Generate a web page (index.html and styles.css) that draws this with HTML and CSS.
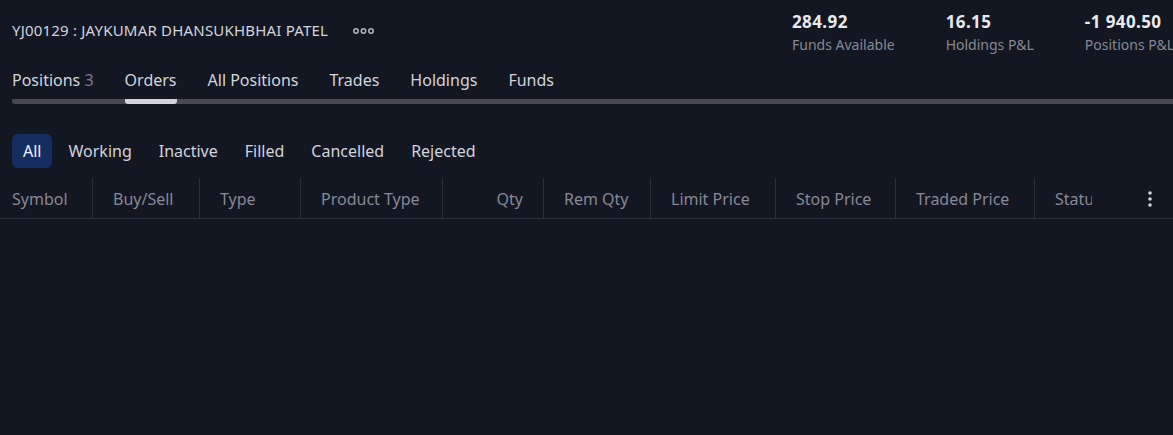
FILE: index.html
```html
<!DOCTYPE html>
<html lang="en">
<head>
<meta charset="utf-8">
<title>Orders</title>
<link rel="stylesheet" href="styles.css">
</head>
<body>
<div class="app">
  <header class="top">
    <div class="account">
      <span class="account-name">YJ00129 : JAYKUMAR DHANSUKHBHAI PATEL</span>
      <span class="more" aria-label="More">
        <svg width="22" height="8" viewBox="0 0 22 8">
          <circle cx="3" cy="4" r="2.2" fill="none" stroke="#b2b5be" stroke-width="1.5"/>
          <circle cx="10.5" cy="4" r="2.2" fill="none" stroke="#b2b5be" stroke-width="1.5"/>
          <circle cx="18" cy="4" r="2.2" fill="none" stroke="#b2b5be" stroke-width="1.5"/>
        </svg>
      </span>
    </div>
    <div class="stats">
      <div class="stat"><div class="stat-value">284.92</div><div class="stat-label">Funds Available</div></div>
      <div class="stat"><div class="stat-value">16.15</div><div class="stat-label">Holdings P&amp;L</div></div>
      <div class="stat"><div class="stat-value">-1 940.50</div><div class="stat-label">Positions P&amp;L</div></div>
    </div>
  </header>

  <nav class="tabs">
    <span class="tab">Positions <span class="count">3</span></span>
    <span class="tab active">Orders</span>
    <span class="tab">All Positions</span>
    <span class="tab">Trades</span>
    <span class="tab">Holdings</span>
    <span class="tab">Funds</span>
  </nav>

  <div class="filters">
    <span class="chip active">All</span>
    <span class="chip">Working</span>
    <span class="chip">Inactive</span>
    <span class="chip">Filled</span>
    <span class="chip">Cancelled</span>
    <span class="chip">Rejected</span>
  </div>

  <div class="thead">
    <div class="th c-symbol">Symbol</div>
    <div class="th c-side">Buy/Sell</div>
    <div class="th c-type">Type</div>
    <div class="th c-product">Product Type</div>
    <div class="th c-qty">Qty</div>
    <div class="th c-rem">Rem Qty</div>
    <div class="th c-limit">Limit Price</div>
    <div class="th c-stop">Stop Price</div>
    <div class="th c-traded">Traded Price</div>
    <div class="th c-status">Status</div>
    <div class="th c-menu">
      <svg width="4" height="16" viewBox="0 0 4 16">
        <circle cx="2" cy="2" r="1.8" fill="#d1d4dc"/>
        <circle cx="2" cy="8" r="1.8" fill="#d1d4dc"/>
        <circle cx="2" cy="14" r="1.8" fill="#d1d4dc"/>
      </svg>
    </div>
  </div>
</div>
</body>
</html>
```

FILE: styles.css
```css
* { box-sizing: border-box; }

html, body {
  margin: 0;
  height: 100%;
  background: #131722;
}

body {
  font-family: "Noto Sans", "DejaVu Sans", sans-serif;
  color: #d1d4dc;
  overflow: hidden;
}

.app {
  width: 1173px;
}

/* Header */
.top {
  display: flex;
  height: 60px;
  overflow: hidden;
}

.account {
  flex: 0 0 792px;
  display: flex;
  align-items: center;
  padding-left: 12px;
  gap: 25px;
}

.account-name {
  font-size: 15px;
  letter-spacing: 0.2px;
  color: #d1d4dc;
}

.more {
  display: flex;
  align-items: center;
  margin-top: 1px;
}

.stats {
  display: flex;
  gap: 51px;
  padding-top: 11px;
  white-space: nowrap;
}

.stat-value {
  font-size: 17px;
  font-weight: 700;
  line-height: 22px;
  letter-spacing: 0.4px;
  color: #e8eaef;
}

.stat-label {
  font-size: 14px;
  line-height: 20px;
  margin-top: 2px;
  color: #868993;
}

/* Tabs */
.tabs {
  display: flex;
  gap: 31px;
  margin: 9px 0 0 12px;
  background: linear-gradient(#464953, #464953) left bottom / 100% 5px no-repeat;
  border-bottom-left-radius: 3px;
}

.tab {
  font-size: 16px;
  line-height: 22px;
  padding-bottom: 8px;
  border-bottom: 5px solid transparent;
  color: #d1d4dc;
  white-space: nowrap;
}

.tab .count {
  color: #787b86;
}

.tab.active {
  border-bottom-color: #d1d4dc;
  border-radius: 0 0 3px 3px;
}

/* Filter chips */
.filters {
  display: flex;
  gap: 5px;
  margin: 30px 0 0 12px;
}

.chip {
  height: 34px;
  line-height: 34px;
  padding: 0 11px;
  border-radius: 6px;
  font-size: 16px;
  color: #d1d4dc;
}

.chip.active {
  background: #142e61;
  color: #f0f3fa;
}

/* Table header */
.thead {
  display: flex;
  margin-top: 10px;
  height: 41px;
  border-bottom: 1px solid #2a2e39;
}

.th {
  height: 40px;
  line-height: 42px;
  font-size: 16px;
  color: #868993;
  padding-left: 20px;
  border-right: 1px solid #2a2e39;
  white-space: nowrap;
  overflow: hidden;
  flex: none;
}

.c-symbol { width: 93px; padding-left: 12px; }
.c-side { width: 107px; }
.c-type { width: 101px; }
.c-product { width: 142px; }
.c-qty { width: 101px; padding-left: 0; padding-right: 20px; text-align: right; }
.c-rem { width: 107px; }
.c-limit { width: 125px; }
.c-stop { width: 120px; }
.c-traded { width: 139px; }
.c-status { width: 57px; border-right: none; }

.c-menu {
  flex: 1;
  border-right: none;
  display: flex;
  align-items: center;
  justify-content: flex-end;
  padding: 2px 21px 0 0;
}
```
